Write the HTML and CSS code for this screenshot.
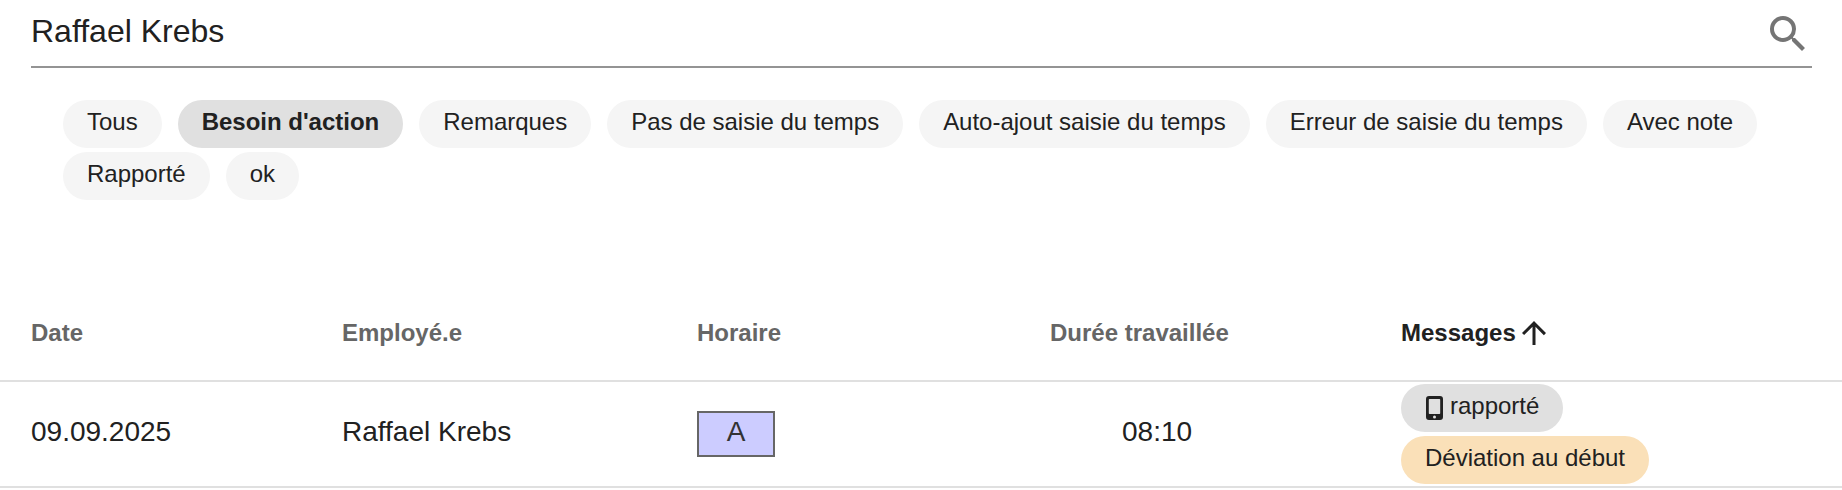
FILE: index.html
```html
<!DOCTYPE html>
<html lang="fr">
<head>
    <meta charset="UTF-8">
    <title>Saisie du temps</title>
    <link rel="stylesheet" href="styles.css">
</head>
<body>
    <div class="search-bar">
        <input class="search-input" type="text" value="Raffael Krebs" aria-label="Recherche">
        <svg class="search-icon" viewBox="0 0 24 24"><path d="M15.5 14h-.79l-.28-.27A6.471 6.471 0 0 0 16 9.5 6.5 6.5 0 1 0 9.5 16c1.61 0 3.09-.59 4.23-1.57l.27.28v.79l5 4.99L20.49 19l-4.99-5zm-6 0C7.01 14 5 11.99 5 9.5S7.01 5 9.5 5 14 7.01 14 9.5 11.99 14 9.5 14z"/></svg>
    </div>

    <div class="filters">
        <span class="chip">Tous</span>
        <span class="chip active">Besoin d'action</span>
        <span class="chip">Remarques</span>
        <span class="chip">Pas de saisie du temps</span>
        <span class="chip">Auto-ajout saisie du temps</span>
        <span class="chip">Erreur de saisie du temps</span>
        <span class="chip">Avec note</span>
        <span class="chip">Rapporté</span>
        <span class="chip">ok</span>
    </div>

    <table class="time-table">
        <thead>
            <tr>
                <th class="col-date">Date</th>
                <th class="col-employee">Employé.e</th>
                <th class="col-shift">Horaire</th>
                <th class="col-duration">Durée travaillée</th>
                <th class="sorted"><span class="sort-label">Messages<svg class="sort-icon" viewBox="0 0 24 24"><path d="M4 12l1.41 1.41L11 7.83V20h2V7.83l5.58 5.59L20 12l-8-8-8 8z"/></svg></span></th>
            </tr>
        </thead>
        <tbody>
            <tr>
                <td>09.09.2025</td>
                <td>Raffael Krebs</td>
                <td class="shift-cell"><div class="shift">A</div></td>
                <td class="duration">08:10</td>
                <td class="messages-cell">
                    <div class="messages">
                        <span class="chip reported"><svg class="phone-icon" viewBox="0 0 17 24"><path fill-rule="evenodd" d="M3 0h11a3 3 0 0 1 3 3v18a3 3 0 0 1-3 3H3a3 3 0 0 1-3-3V3a3 3 0 0 1 3-3zM3.5 3a.7.7 0 0 0-.7.7v13.6a.7.7 0 0 0 .7.7h10a.7.7 0 0 0 .7-.7V3.7a.7.7 0 0 0-.7-.7zM8.5 19.5a1.5 1.5 0 1 0 0 3 1.5 1.5 0 0 0 0-3z"/></svg>rapporté</span>
                        <span class="chip warning">Déviation au début</span>
                    </div>
                </td>
            </tr>
        </tbody>
    </table>
</body>
</html>
```
FILE: styles.css
```css
* {
    box-sizing: border-box;
}
body {
    margin: 0;
    font-family: "Liberation Sans", Arial, sans-serif;
    color: #212121;
    background-color: #fff;
}
.search-bar {
    display: flex;
    align-items: flex-start;
    height: 68px;
    margin: 0 30px 0 31px;
    border-bottom: 2px solid #949494;
}
.search-input {
    flex: 1;
    height: 62px;
    padding: 0;
    border: none;
    outline: none;
    background: none;
    font-family: inherit;
    font-size: 32px;
    color: inherit;
}
.search-icon {
    width: 48px;
    height: 48px;
    margin-top: 10px;
    fill: #757575;
}
.filters {
    display: flex;
    flex-wrap: wrap;
    gap: 4px 16px;
    padding: 32px 63px 0;
}
.chip {
    display: inline-flex;
    align-items: center;
    height: 48px;
    padding: 0 24px 4px;
    border-radius: 24px;
    background-color: #f5f5f5;
    font-size: 24px;
    letter-spacing: -0.01px;
    white-space: nowrap;
}
.chip.active {
    background-color: #e0e0e0;
    font-weight: bold;
}
.time-table {
    width: 100%;
    margin-top: 68px;
    border-collapse: separate;
    border-spacing: 0;
    table-layout: fixed;
}
.time-table th {
    height: 114px;
    padding: 17px 0 0;
    border-bottom: 2px solid #e0e0e0;
    font-size: 24px;
    text-align: left;
    color: #666;
}
.time-table td {
    height: 106px;
    padding: 0 0 4px;
    border-bottom: 2px solid #e0e0e0;
    font-size: 28px;
}
.time-table .shift-cell, .time-table .messages-cell {
    padding-bottom: 0;
}
.time-table th:first-child, .time-table td:first-child {
    padding-left: 31px;
}
.col-date {
    width: 342px;
}
.col-employee {
    width: 355px;
}
.col-shift {
    width: 353px;
}
.col-duration {
    width: 351px;
}
.time-table .sorted {
    color: #212121;
}
.sort-label {
    display: flex;
    align-items: center;
    height: 28px;
}
.sort-icon {
    width: 36px;
    height: 36px;
    fill: #212121;
}
.shift {
    width: 78px;
    height: 46px;
    border: 2px solid #666;
    background-color: #ccf;
    color: #333;
    line-height: 38px;
    text-align: center;
}
.time-table .duration {
    padding-left: 72px;
}
.messages {
    display: flex;
    flex-direction: column;
    align-items: flex-start;
    gap: 4px;
}
.reported {
    background-color: #e0e0e0;
}
.warning {
    background-color: #fae0b8;
}
.phone-icon {
    width: 17px;
    height: 24px;
    margin: 4px 7px 0 1px;
    fill: #212121;
}
```
